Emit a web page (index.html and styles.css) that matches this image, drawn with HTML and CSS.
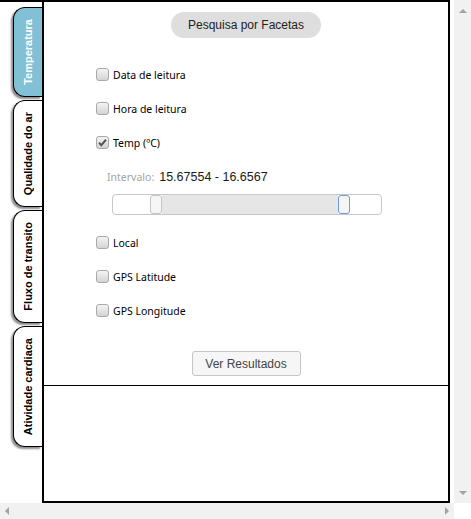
FILE: index.html
```html
<!DOCTYPE html>
<html>
<head>
<meta charset="utf-8">
<link rel="stylesheet" href="styles.css">
</head>
<body>
<div class="page">
  <div class="top">
    <div class="stage">
      <div class="tabs">
        <div class="tab active"><span>Temperatura</span></div>
        <div class="tab"><span>Qualidade do ar</span></div>
        <div class="tab"><span>Fluxo de transito</span></div>
        <div class="tab"><span>Atividade cardiaca</span></div>
      </div>
      <div class="panel">
        <div class="form">
          <div class="title">Pesquisa por Facetas</div>
          <div class="facets">
            <div class="row"><span class="cb"></span><span class="lbl">Data de leitura</span></div>
            <div class="row"><span class="cb"></span><span class="lbl">Hora de leitura</span></div>
            <div class="row"><span class="cb checked"><svg width="11" height="11" viewBox="0 0 11 11"><path d="M2 5.8 L4.3 8.2 L9 2.6" fill="none" stroke="#555" stroke-width="2"/></svg></span><span class="lbl">Temp (ºC)</span></div>
            <div class="range">
              <div class="interval"><span class="ilbl">Intervalo:</span><span class="ival">15.67554 - 16.6567</span></div>
              <div class="slider">
                <div class="fill"></div>
                <div class="handle"></div>
                <div class="mid"></div>
                <div class="handle focus"></div>
                <div class="rest"></div>
              </div>
            </div>
            <div class="row"><span class="cb"></span><span class="lbl">Local</span></div>
            <div class="row"><span class="cb"></span><span class="lbl">GPS Latitude</span></div>
            <div class="row"><span class="cb"></span><span class="lbl">GPS Longitude</span></div>
          </div>
          <div class="actions"><button class="btn">Ver Resultados</button></div>
        </div>
        <div class="results"></div>
      </div>
    </div>
    <div class="gap"></div>
    <div class="vscroll">
      <span class="arr up"></span>
      <span class="arr down"></span>
    </div>
  </div>
  <div class="bottom">
    <div class="hscroll">
      <span class="arr left"></span>
      <span class="arr right"></span>
    </div>
    <div class="corner"></div>
  </div>
</div>
</body>
</html>
```

FILE: styles.css
```css
html, body {
  margin: 0;
  padding: 0;
  background: #fff;
}
.page {
  width: 471px;
  height: 519px;
  display: flex;
  flex-direction: column;
  overflow: hidden;
}
.top {
  display: flex;
  height: 503px;
}
.stage {
  width: 450px;
  border-top: 2px solid #000;
  display: flex;
}
.gap {
  width: 4px;
}
.vscroll {
  width: 17px;
  background: #f1f1f1;
  display: flex;
  flex-direction: column;
  justify-content: space-between;
  align-items: center;
  padding: 9px 0 8px;
  box-sizing: border-box;
}
.arr {
  width: 0;
  height: 0;
  display: block;
}
.arr.up {
  border-left: 4px solid transparent;
  border-right: 4px solid transparent;
  border-bottom: 4px solid #a3a3a3;
}
.arr.down {
  border-left: 4px solid transparent;
  border-right: 4px solid transparent;
  border-top: 4px solid #a3a3a3;
}
.bottom {
  display: flex;
  height: 16px;
}
.hscroll {
  width: 454px;
  background: #f1f1f1;
  display: flex;
  justify-content: space-between;
  align-items: center;
  padding: 0 5px 0 5px;
  box-sizing: border-box;
}
.arr.left {
  border-top: 4px solid transparent;
  border-bottom: 4px solid transparent;
  border-right: 4px solid #a3a3a3;
}
.arr.right {
  border-top: 4px solid transparent;
  border-bottom: 4px solid transparent;
  border-left: 4px solid #a3a3a3;
}
.corner {
  width: 17px;
}

/* tabs */
.tabs {
  width: 42px;
  display: flex;
  flex-direction: column;
  align-items: flex-end;
  padding-top: 5px;
  gap: 3px;
}
.tab {
  width: 28px;
  border: 1px solid #000;
  border-right: none;
  border-radius: 12px 0 0 12px;
  background: #fff;
  box-shadow: -2px 2px 2px rgba(0,0,0,0.45);
  display: flex;
  justify-content: center;
  padding: 11px 0;
}
.tab span {
  writing-mode: vertical-rl;
  transform: rotate(180deg);
  font-family: "Liberation Sans", Arial, sans-serif;
  font-weight: bold;
  font-size: 11px;
  color: #000;
  line-height: 14px;
}
.tab.active {
  background: #82c0d6;
}
.tab.active span {
  color: #fff;
}

/* panel */
.panel {
  flex: 1;
  border-left: 2px solid #000;
  border-right: 2px solid #000;
  border-bottom: 2px solid #000;
  display: flex;
  flex-direction: column;
}
.form {
  border-bottom: 1px solid #000;
  padding-bottom: 9px;
}
.title {
  width: 150px;
  height: 26px;
  margin: 10px auto 0;
  background: #dedede;
  border-radius: 13px;
  font-family: "Liberation Sans", Arial, sans-serif;
  font-size: 12px;
  color: #222;
  display: flex;
  align-items: center;
  justify-content: center;
}
.facets {
  margin-top: 20px;
  padding-left: 52px;
}
.row {
  height: 34px;
  display: flex;
  align-items: center;
}
.cb {
  width: 11px;
  height: 11px;
  border: 1px solid #a9a9a9;
  border-radius: 3px;
  background: linear-gradient(#f4f4f4, #d4d4d4);
  margin-right: 4px;
  margin-top: -2px;
  display: flex;
  align-items: center;
  justify-content: center;
}
.cb svg {
  display: block;
}
.lbl {
  font-family: "Noto Sans", "Liberation Sans", sans-serif;
  font-size: 10.5px;
  color: #000;
}
.range {
  padding-left: 11px;
  padding-bottom: 11px;
}
.interval {
  height: 34px;
  display: flex;
  align-items: center;
}
.ilbl {
  font-family: "Noto Sans", "Liberation Sans", sans-serif;
  font-size: 10.5px;
  color: #a5a5a5;
  margin-right: 5px;
}
.ival {
  font-family: "Liberation Sans", Arial, sans-serif;
  font-size: 12.5px;
  color: #1a1a1a;
}
.slider {
  margin-left: 5px;
  width: 270px;
  height: 21px;
  border: 1px solid #c8c8c8;
  border-radius: 4px;
  box-sizing: border-box;
  background: #fff;
  display: flex;
  align-items: center;
}
.slider .fill {
  width: 37px;
}
.slider .mid {
  flex: 1;
  align-self: stretch;
  background: #e6e6e6;
}
.slider .rest {
  width: 31px;
}
.handle {
  width: 12px;
  height: 19px;
  border: 1px solid #c5c5c5;
  border-radius: 3px;
  background: #f6f6f6;
  box-sizing: border-box;
}
.handle.focus {
  border-color: #6f9be0;
}
.actions {
  display: flex;
  justify-content: center;
  margin-top: 23px;
}
.btn {
  width: 109px;
  height: 25px;
  border: 1px solid #c5c5c5;
  border-radius: 3px;
  background: #f6f6f6;
  font-family: "Liberation Sans", Arial, sans-serif;
  font-size: 12px;
  color: #454545;
  padding: 0;
}
.results {
  flex: 1;
}
```
